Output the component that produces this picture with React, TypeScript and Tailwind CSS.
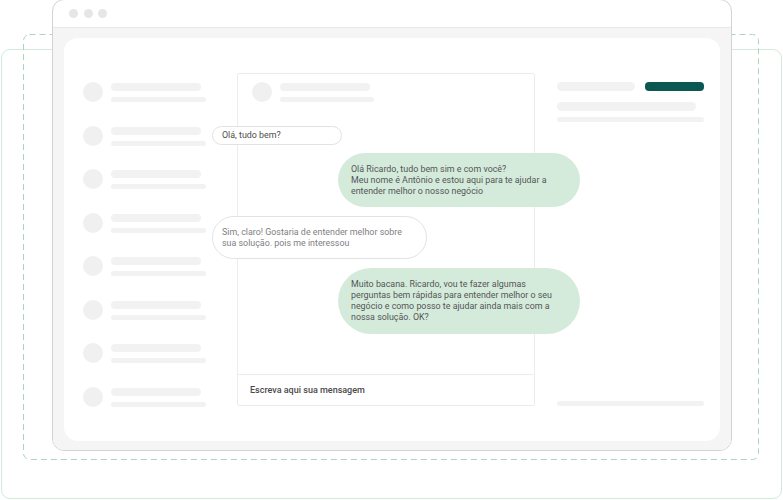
import React from "react";

const font = { fontFamily: "Roboto, 'Noto Sans', sans-serif" };

function LeftRow() {
  return (
    <div className="flex items-start">
      <div className="w-[20px] h-[20px] rounded-full bg-[#f0f0f0] shrink-0" />
      <div className="ml-[8px] flex flex-col">
        <div className="mt-[1px] w-[90px] h-[8px] rounded-full bg-[#f2f2f2]" />
        <div className="mt-[6px] w-[95px] h-[5px] rounded-full bg-[#f2f2f2]" />
      </div>
    </div>
  );
}

export default function App() {
  const rows = [0, 1, 2, 3, 4, 5, 6, 7];
  return (
    <div className="relative w-[783px] h-[500px] overflow-hidden bg-white" style={font}>
      {/* outer green frame */}
      <div className="absolute left-[1px] top-[49px] w-[781px] h-[450px] rounded-[9px] border border-[#d3eadc]" />
      {/* dashed frame */}
      <svg className="absolute left-0 top-0" width="783" height="500">
        <rect
          x="23.5"
          y="34.5"
          width="735"
          height="425"
          rx="6"
          fill="none"
          stroke="#a9d7bd"
          strokeWidth="1"
          strokeDasharray="6 4"
        />
      </svg>
      {/* browser window */}
      <div className="absolute left-[52px] top-[-1px] w-[680px] h-[452px] rounded-[12px] border border-[#d3d3d3] bg-white flex flex-col overflow-hidden">
        <div className="h-[28px] shrink-0 border-b border-[#e7e9e7] flex items-center pl-[16px] gap-[5.5px]">
          <div className="w-[9px] h-[9px] rounded-full bg-[#e6e6e6]" />
          <div className="w-[9px] h-[9px] rounded-full bg-[#e6e6e6]" />
          <div className="w-[9px] h-[9px] rounded-full bg-[#e6e6e6]" />
        </div>
        <div className="flex-1 bg-[#f4f5f4] pt-[10px] pl-[11px] pr-[11px] pb-[9px]">
          <div className="relative h-[403px] rounded-[14px] bg-white flex items-start pl-[19px]">
            {/* left list */}
            <div className="mt-[44px] w-[123px] flex flex-col gap-[23.5px]">
              {rows.map((r) => (
                <LeftRow key={r} />
              ))}
            </div>
            {/* chat panel */}
            <div className="ml-[31px] mt-[35px] w-[298px] h-[333px] border border-[#ececec] rounded-[2px] flex flex-col">
              <div className="flex items-start pl-[14px] pt-[8px]">
                <div className="w-[20px] h-[20px] rounded-full bg-[#f0f0f0] shrink-0" />
                <div className="ml-[8px] flex flex-col">
                  <div className="mt-[1px] w-[90px] h-[8px] rounded-full bg-[#f2f2f2]" />
                  <div className="mt-[6px] w-[94px] h-[5px] rounded-full bg-[#f2f2f2]" />
                </div>
              </div>
              <div className="mt-auto h-[31px] border-t border-[#ececec] flex items-center pl-[12px] pt-[2px]">
                <span className="text-[9px] font-medium text-[#4a4a4a] whitespace-nowrap">
                  Escreva aqui sua mensagem
                </span>
              </div>
            </div>
            {/* right column */}
            <div className="ml-[22px] mt-[44px] w-[147px] h-[324px] flex flex-col">
              <div className="flex items-center gap-[10px]">
                <div className="w-[78px] h-[9px] rounded-full bg-[#f2f2f2]" />
                <div className="w-[59px] h-[9px] rounded-[4px] bg-[#0b5853]" />
              </div>
              <div className="mt-[11px] w-[139px] h-[9px] rounded-full bg-[#f2f2f2]" />
              <div className="mt-[6px] w-[147px] h-[5px] rounded-full bg-[#f2f2f2]" />
              <div className="mt-auto w-[147px] h-[5px] rounded-full bg-[#f2f2f2]" />
            </div>

            {/* bubbles */}
            <div className="absolute left-[148px] top-[88px] w-[130px] h-[19px] rounded-full border border-[#e2e2e2] bg-white flex items-center pl-[9px]">
              <span className="text-[8.9px] leading-[11px] text-[#4d4d4d] whitespace-nowrap">Olá, tudo bem?</span>
            </div>
            <div className="absolute left-[274px] top-[115px] w-[242px] h-[54px] rounded-full bg-[#d4ebdc] flex items-center pl-[13px]">
              <p className="text-[8.9px] leading-[11px] text-[#555555] whitespace-nowrap">
                Olá Ricardo, tudo bem sim e com você?
                <br />
                Meu nome é Antônio e estou aqui para te ajudar a
                <br />
                entender melhor o nosso negócio
              </p>
            </div>
            <div className="absolute left-[148px] top-[178px] w-[215px] h-[43px] rounded-full border border-[#e2e2e2] bg-white flex items-center pl-[9px]">
              <p className="text-[8.9px] leading-[11px] text-[#808080] whitespace-nowrap">
                Sim, claro! Gostaria de entender melhor sobre
                <br />
                sua solução. pois me interessou
              </p>
            </div>
            <div className="absolute left-[274px] top-[229.5px] w-[242px] h-[66px] rounded-[33px] bg-[#d4ebdc] flex items-center pl-[13px]">
              <p className="text-[8.9px] leading-[11px] text-[#555555] whitespace-nowrap">
                Muito bacana. Ricardo, vou te fazer algumas
                <br />
                perguntas bem rápidas para entender melhor o seu
                <br />
                negócio e como posso te ajudar ainda mais com a
                <br />
                nossa solução. OK?
              </p>
            </div>
          </div>
        </div>
      </div>
    </div>
  );
}
